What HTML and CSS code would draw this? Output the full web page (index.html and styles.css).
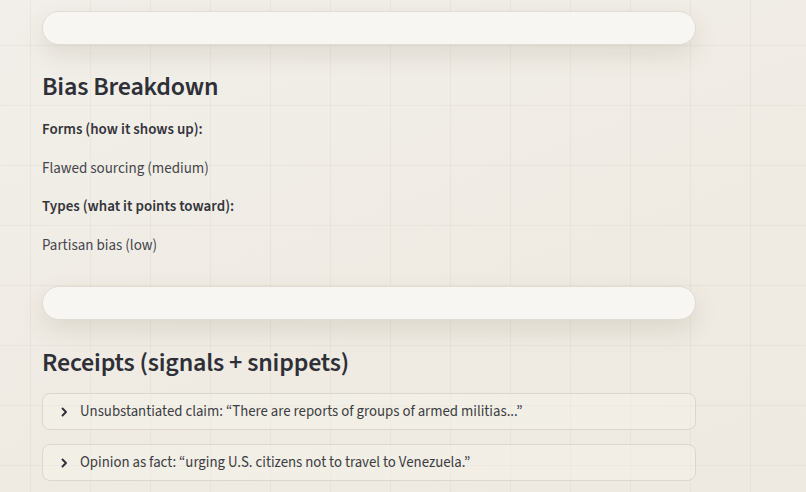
FILE: index.html
```html
<!DOCTYPE html>
<html lang="en">
<head>
  <meta charset="UTF-8" />
  <meta name="viewport" content="width=device-width, initial-scale=1.0"/>
  <title>Bias Report</title>
  <link rel="stylesheet" href="styles.css">
</head>
<body>

  <main class="report">
    <div class="pill-bar"></div>

    <section class="breakdown">
      <h2>Bias Breakdown</h2>
      <p class="label">Forms (how it shows up):</p>
      <p class="value">Flawed sourcing (medium)</p>
      <p class="label">Types (what it points toward):</p>
      <p class="value">Partisan bias (low)</p>
    </section>

    <div class="pill-bar"></div>

    <section class="receipts">
      <h2>Receipts (signals + snippets)</h2>
      <details class="receipt">
        <summary>
          <svg class="chev" width="7" height="10" viewBox="0 0 7 10"><path d="M1.5 1.5 L5 5 L1.5 8.5" fill="none" stroke="currentColor" stroke-width="1.9" stroke-linecap="round" stroke-linejoin="round"/></svg>
          Unsubstantiated claim: “There are reports of groups of armed militias...”
        </summary>
      </details>
      <details class="receipt">
        <summary>
          <svg class="chev" width="7" height="10" viewBox="0 0 7 10"><path d="M1.5 1.5 L5 5 L1.5 8.5" fill="none" stroke="currentColor" stroke-width="1.9" stroke-linecap="round" stroke-linejoin="round"/></svg>
          Opinion as fact: “urging U.S. citizens not to travel to Venezuela.”
        </summary>
      </details>
    </section>
  </main>

</body>
</html>
```

FILE: styles.css
```css
* {
  box-sizing: border-box;
  margin: 0;
  padding: 0;
}

body {
  font-family: 'Source Sans 3', 'Lato', sans-serif;
  color: #34343b;
  background-color: #efebe4;
  background-image:
    linear-gradient(to right, rgba(120, 100, 70, 0.06) 1px, transparent 1px),
    linear-gradient(to bottom, rgba(120, 100, 70, 0.06) 1px, transparent 1px),
    linear-gradient(160deg, #f2efea 0%, #efebe3 60%, #eeeae1 100%);
  background-size: 60px 60px, 60px 60px, 100% 100%;
  background-position: 30px 45px, 30px 45px, 0 0;
  min-height: 100vh;
  padding: 11px 0 0 42px;
}

.report {
  width: 654px;
}

.pill-bar {
  height: 34px;
  background: #f8f6f2;
  border: 1px solid #e1dcd4;
  border-radius: 17px;
  box-shadow: 0 10px 24px rgba(90, 70, 40, 0.12);
}

h2 {
  font-size: 26px;
  font-weight: 600;
  color: #2f3037;
  letter-spacing: -0.2px;
}

.breakdown {
  padding: 23px 0 11px;
}

.breakdown h2 {
  margin-bottom: 16px;
}

.label {
  font-size: 15px;
  font-weight: 600;
  line-height: 18px;
  margin-bottom: 21px;
}

.value {
  font-size: 15px;
  line-height: 18px;
  color: #45454b;
  margin-bottom: 20px;
}

.receipts {
  padding-top: 24px;
}

.receipts h2 {
  margin-bottom: 12px;
}

.receipt {
  border: 1px solid #ddd6cb;
  border-radius: 8px;
  margin-bottom: 14px;
  background: rgba(248, 245, 239, 0.35);
}

.receipt summary {
  list-style: none;
  display: flex;
  align-items: center;
  gap: 12px;
  height: 35px;
  padding-left: 18px;
  font-size: 14.8px;
  color: #3c3c42;
  cursor: pointer;
}

.receipt summary::-webkit-details-marker {
  display: none;
}

.chev {
  flex: none;
  color: #2f3037;
}
```
